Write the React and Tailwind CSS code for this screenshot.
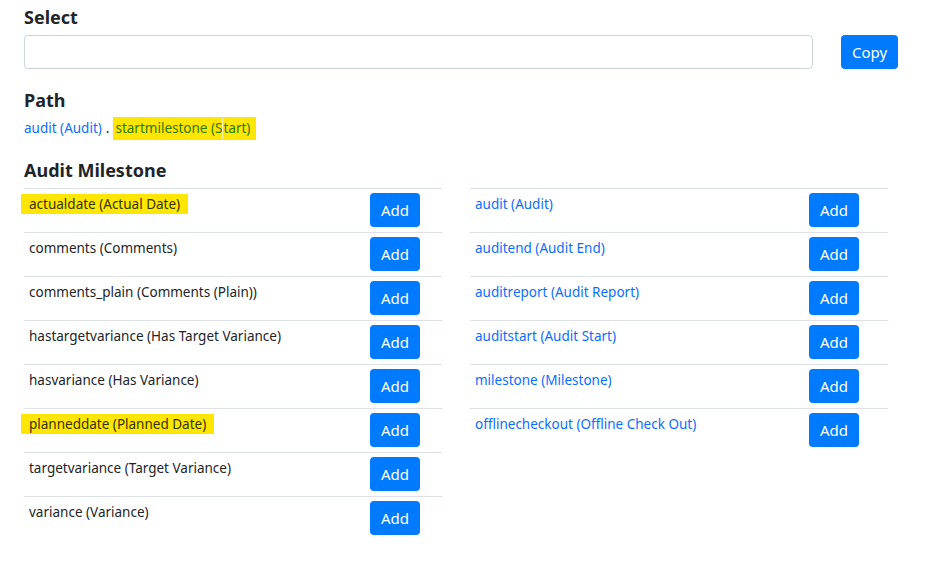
import React from 'react';

const leftFields = [
  { label: 'actualdate (Actual Date)', mark: true },
  { label: 'comments (Comments)' },
  { label: 'comments_plain (Comments (Plain))' },
  { label: 'hastargetvariance (Has Target Variance)' },
  { label: 'hasvariance (Has Variance)' },
  { label: 'planneddate (Planned Date)', mark: true },
  { label: 'targetvariance (Target Variance)' },
  { label: 'variance (Variance)' },
];

const rightLinks = [
  'audit (Audit)',
  'auditend (Audit End)',
  'auditreport (Audit Report)',
  'auditstart (Audit Start)',
  'milestone (Milestone)',
  'offlinecheckout (Offline Check Out)',
];

const AddButton = () => (
  <button className="h-[34px] w-[50px] shrink-0 rounded-[4px] bg-[#007bff] text-[15px] text-white">
    Add
  </button>
);

const Row = ({ children, right }) => (
  <div
    className={
      'flex items-start justify-between border-t border-[#dee2e6] pt-[4px] pb-[5px] pl-[5px] ' +
      (right ? 'pr-[29px]' : 'pr-[22px]')
    }
  >
    <div className="pt-[1px] text-[13.5px] leading-[21px]">{children}</div>
    <AddButton />
  </div>
);

export default function App() {
  return (
    <div className="min-h-screen bg-white px-6 pt-[4px] text-[#212529]" style={{ fontFamily: '"Noto Sans", "Open Sans", sans-serif' }}>
      {/* Select */}
      <h5 className="text-[18px] font-bold leading-[26px]">Select</h5>
      <div className="mt-[5px] flex items-center">
        <input
          type="text"
          className="h-[34px] w-[789px] rounded-[4px] border border-[#ced4da] bg-white px-3 outline-none"
        />
        <button className="ml-[28px] h-[34px] w-[57px] rounded-[4px] bg-[#007bff] text-[15px] text-white">
          Copy
        </button>
      </div>

      {/* Path */}
      <h5 className="mt-[18px] text-[18px] font-bold leading-[26px]">Path</h5>
      <div className="mt-[4px] flex items-center text-[13.5px] leading-[21px]">
        <span className="text-[#0d6efd]">audit (Audit)</span>
        <span className="mx-[4px]">.</span>
        <span className="flex bg-[#ffe600] py-[1px] text-[#2a7a0c]">
          <span className="pl-[2px]">startmilestone (S</span>
          <span className="w-px bg-[#fff7b0]" />
          <span className="pr-[6px]">tart)</span>
        </span>
      </div>

      {/* Audit Milestone */}
      <h5 className="mt-[17px] text-[18px] font-bold leading-[26px]">Audit Milestone</h5>
      <div className="mt-[5px] grid grid-cols-[418px_418px] gap-x-[28px]">
        <div>
          {leftFields.map((f) => (
            <Row key={f.label}>
              {f.mark ? (
                <span className="-ml-[8px] bg-[#ffe600] px-[8px] py-[1px] text-[#333300]">{f.label}</span>
              ) : (
                f.label
              )}
            </Row>
          ))}
        </div>
        <div>
          {rightLinks.map((l) => (
            <Row key={l} right>
              <span className="text-[#0d6efd]">{l}</span>
            </Row>
          ))}
        </div>
      </div>
    </div>
  );
}
